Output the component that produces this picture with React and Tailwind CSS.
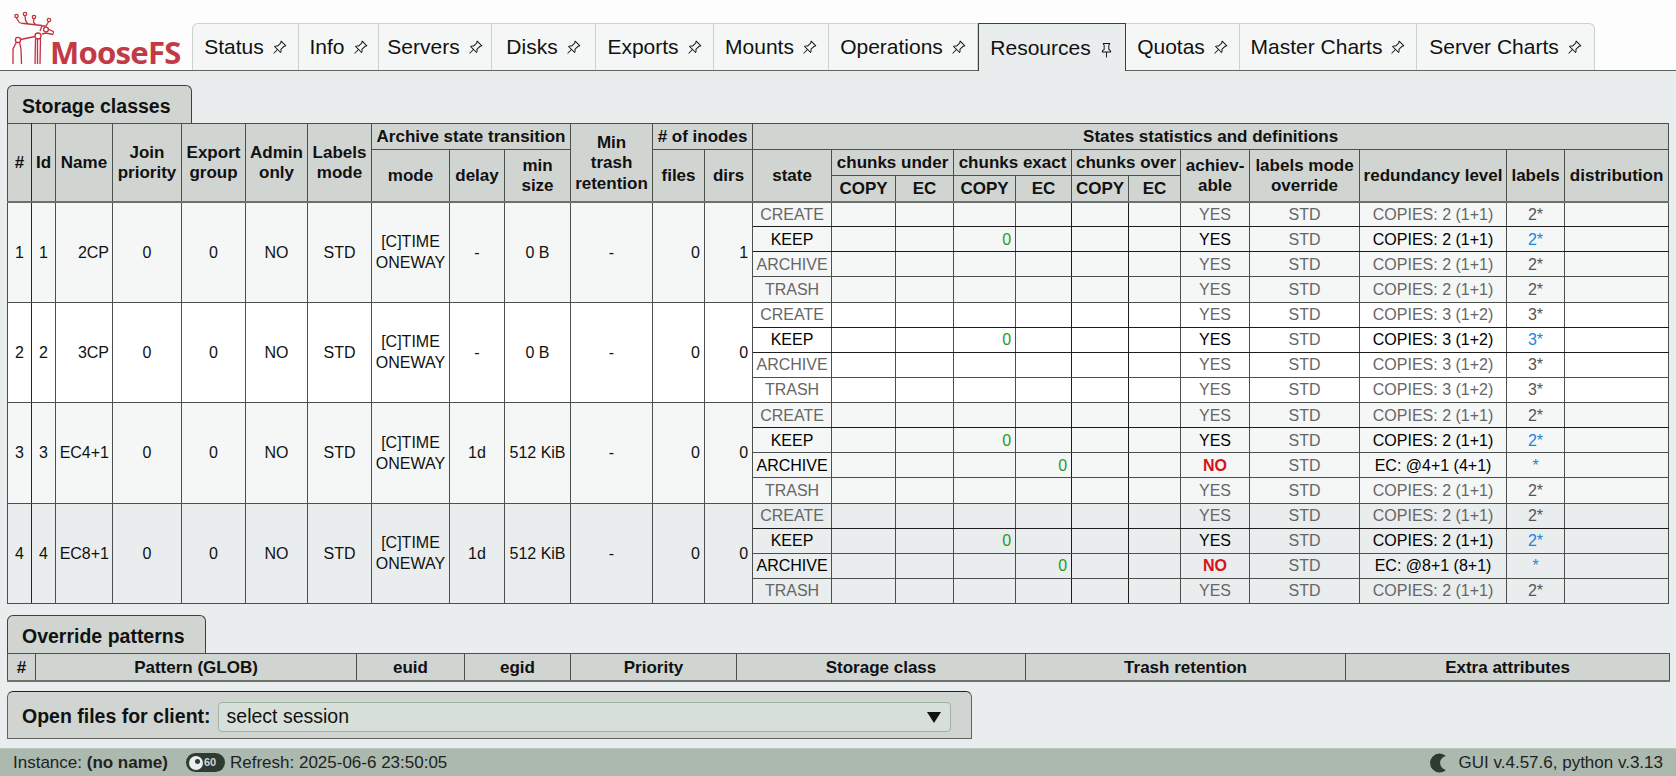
import React from 'react';
import { BsPinAngle, BsPin } from 'react-icons/bs';

const TABS = [
  ['Status', 107], ['Info', 80], ['Servers', 113], ['Disks', 104], ['Exports', 118], ['Mounts', 115],
  ['Operations', 149], ['Resources', 148], ['Quotas', 114], ['Master Charts', 177], ['Server Charts', 178],
];

const COLS = [24, 24, 57, 69, 64, 62, 64, 78, 55, 66, 82, 52, 48, 79, 64, 58, 62, 56, 57, 52, 69, 110, 147, 58, 104];
const OVERRIDE_COLS = [28, 321, 108, 106, 166, 289, 320, 324];

const th = 'border border-[#4a504c] bg-[#d0d5d1] font-bold text-center px-0 pt-[2px] leading-[20.5px]';
const td = 'border border-[#4a504c] text-center p-0 leading-[21px]';

const RULES = [
  { id: 1, name: '2CP', bg: 'bg-[#f5f7f6]', delay: '-', min: '0 B', copies: 'COPIES: 2 (1+1)', lab: '2*', dirs: 1 },
  { id: 2, name: '3CP', bg: 'bg-white', delay: '-', min: '0 B', copies: 'COPIES: 3 (1+2)', lab: '3*', dirs: 0 },
  { id: 3, name: 'EC4+1', bg: 'bg-[#f5f7f6]', delay: '1d', min: '512 KiB', copies: 'COPIES: 2 (1+1)', lab: '2*', ec: 'EC: @4+1 (4+1)', dirs: 0 },
  { id: 4, name: 'EC8+1', bg: 'bg-[#e9eded]', delay: '1d', min: '512 KiB', copies: 'COPIES: 2 (1+1)', lab: '2*', ec: 'EC: @8+1 (8+1)', dirs: 0 },
];

const STATES = ['CREATE', 'KEEP', 'ARCHIVE', 'TRASH'];

const Logo = () => (
  <div className="w-[192px] flex items-end shrink-0 pl-[10px]">
    <svg width="44" height="56" viewBox="10 12 44 56" fill="none" stroke="#c4323f" strokeWidth="1.3" className="shrink-0 mb-[3px]">
      <circle cx="16.5" cy="17" r="1.7" />
      <circle cx="25" cy="15" r="1.7" />
      <circle cx="34" cy="18" r="1.7" />
      <circle cx="49" cy="21" r="1.7" />
      <path d="M16.5 19 L19 23 Q20 24.5 24 24.5 L42 26.5 M25 17 L25.5 21 Q26 23 28 24.8 M34 20 L33.5 23 Q34 24.5 36 25.5 M48.5 23 L46 27 L42 27 L40 32" />
      <circle cx="46" cy="30.5" r="2.4" />
      <circle cx="38" cy="37" r="3" />
      <circle cx="18" cy="41" r="2.6" />
      <path d="M48 30 L54 33 L52.5 35.5 L46 34 L42 35 M20.5 40.5 L35 37.5" />
      <path d="M35.5 40 L35 65 M37.5 40 L37.5 65 M40.5 39 L40 65" />
      <path d="M16.5 43 L13 50 L13 65 M19.5 43 L21 50 L21.5 65" />
    </svg>
    <span className="font-['Noto_Sans'] font-bold text-[31px] leading-[31px] tracking-[-0.8px] text-[#c23a45] mb-[2px] -ml-[4px]">MooseFS</span>
  </div>
);

const Tabs = () => (
  <div className="flex self-end">
    {TABS.map(([name, w], i) => {
      const active = name === 'Resources';
      return (
        <div
          key={name}
          style={{ width: w }}
          className={`flex items-center justify-center gap-[8px] text-[21px] text-[#111] border-t border-r ${
            active
              ? 'bg-[#e9eded] border-[#3a423c] border-l -mb-px h-[48px]'
              : 'h-[47px] bg-[#f5f7f6] border-[#ccd2ce]'
          } ${i === 0 ? 'border-l rounded-tl-[6px]' : ''} ${i === TABS.length - 1 ? 'rounded-tr-[6px]' : ''}`}
        >
          {name}
          {active ? <BsPin size={15} className="mt-[5px]" /> : <BsPinAngle size={15} />}
        </div>
      );
    })}
  </div>
);

const ClassesTable = () => (
  <table className="table-fixed border-collapse w-[1662px] text-[16px] text-[#111]">
    <colgroup>
      {COLS.map((w, i) => <col key={i} style={{ width: w }} />)}
    </colgroup>
    <thead className="border-b-2 border-b-[#6a716c]">
      <tr className="h-[26px] text-[17px]">
        <th rowSpan={3} className={`${th} border-r-[#1c2a20]`}>#</th>
        <th rowSpan={3} className={th}>Id</th>
        <th rowSpan={3} className={th}>Name</th>
        <th rowSpan={3} className={th}>Join<br />priority</th>
        <th rowSpan={3} className={th}>Export<br />group</th>
        <th rowSpan={3} className={th}>Admin<br />only</th>
        <th rowSpan={3} className={th}>Labels<br />mode</th>
        <th colSpan={3} className={th}>Archive state transition</th>
        <th rowSpan={3} className={th}>Min<br />trash<br />retention</th>
        <th colSpan={2} className={th}># of inodes</th>
        <th colSpan={12} className={th}>States statistics and definitions</th>
      </tr>
      <tr className="h-[26px] text-[17px]">
        <th rowSpan={2} className={th}>mode</th>
        <th rowSpan={2} className={th}>delay</th>
        <th rowSpan={2} className={th}>min<br />size</th>
        <th rowSpan={2} className={th}>files</th>
        <th rowSpan={2} className={th}>dirs</th>
        <th rowSpan={2} className={th}>state</th>
        <th colSpan={2} className={th}>chunks under</th>
        <th colSpan={2} className={th}>chunks exact</th>
        <th colSpan={2} className={th}>chunks over</th>
        <th rowSpan={2} className={th}>achiev-<br />able</th>
        <th rowSpan={2} className={th}>labels mode<br />override</th>
        <th rowSpan={2} className={th}>redundancy level</th>
        <th rowSpan={2} className={th}>labels</th>
        <th rowSpan={2} className={th}>distribution</th>
      </tr>
      <tr className="h-[26px] text-[17px]">
        {['COPY', 'EC', 'COPY', 'EC', 'COPY', 'EC'].map((c, i) => <th key={i} className={th}>{c}</th>)}
      </tr>
    </thead>
    <tbody>
      {RULES.map((r) =>
        STATES.map((s, i) => {
          const isEc = s === 'ARCHIVE' && r.ec;
          const strong = s === 'KEEP' || isEc;
          const tone = strong ? 'text-black' : 'text-[#666]';
          // the line under CREATE (and under KEEP in the first two rules) reads darker
          const dark = s === 'CREATE' || (s === 'KEEP' && !r.ec);
          const cell = `${td} ${dark ? 'border-b-[#1c1c1c]' : ''}`;
          return (
            <tr key={s} className={`h-[25.125px] ${r.bg}`}>
              {i === 0 && (
                <>
                  <td rowSpan={4} className={`${td} border-r-[#1c2a20]`}>{r.id}</td>
                  <td rowSpan={4} className={td}>{r.id}</td>
                  <td rowSpan={4} className={`${td} text-right pr-[3px]`}>{r.name}</td>
                  <td rowSpan={4} className={td}>0</td>
                  <td rowSpan={4} className={td}>0</td>
                  <td rowSpan={4} className={td}>NO</td>
                  <td rowSpan={4} className={td}>STD</td>
                  <td rowSpan={4} className={td}>[C]TIME<br />ONEWAY</td>
                  <td rowSpan={4} className={td}>{r.delay}</td>
                  <td rowSpan={4} className={td}>{r.min}</td>
                  <td rowSpan={4} className={td}>-</td>
                  <td rowSpan={4} className={`${td} text-right pr-[4px]`}>0</td>
                  <td rowSpan={4} className={`${td} text-right pr-[4px]`}>{r.dirs}</td>
                </>
              )}
              <td className={`${cell} ${s === 'ARCHIVE' && !r.ec ? 'text-[#666]' : tone}`}>{s}</td>
              <td className={cell} />
              <td className={cell} />
              <td className={`${cell} text-right pr-[4px] text-[#2a9a1e]`}>{s === 'KEEP' ? '0' : ''}</td>
              <td className={`${cell} border-r-[#1c1c1c] text-right pr-[4px] text-[#2a9a1e]`}>{isEc ? '0' : ''}</td>
              <td className={`${cell} border-r-[#1c1c1c]`} />
              <td className={cell} />
              <td className={`${cell} ${isEc ? 'text-[#d8121a] font-bold' : tone}`}>{isEc ? 'NO' : 'YES'}</td>
              <td className={`${cell} text-[#666]`}>STD</td>
              <td className={`${cell} ${tone}`}>{isEc ? r.ec : r.copies}</td>
              <td className={`${cell} ${strong ? 'text-[#1c84dc]' : 'text-[#555]'}`}>{isEc ? '*' : r.lab}</td>
              <td className={cell} />
            </tr>
          );
        })
      )}
    </tbody>
  </table>
);

const OverrideTable = () => (
  <table className="table-fixed border-collapse w-[1662px] text-[17px] text-[#111]">
    <colgroup>
      {OVERRIDE_COLS.map((w, i) => <col key={i} style={{ width: w }} />)}
    </colgroup>
    <thead className="border-b-2 border-b-[#6a716c]">
      <tr className="h-[27px]">
        {['#', 'Pattern (GLOB)', 'euid', 'egid', 'Priority', 'Storage class', 'Trash retention', 'Extra attributes'].map((h) => (
          <th key={h} className={th}>{h}</th>
        ))}
      </tr>
    </thead>
  </table>
);

const Title = ({ children }) => (
  <div className="inline-block align-bottom h-[38px] leading-[40px] pl-[14px] pr-[20px] bg-[#d0d5d1] border border-b-0 border-[#3a423c] rounded-t-[6px] font-bold text-[19.5px] text-[#111]">
    {children}
  </div>
);

const App = () => (
  <div className="h-screen flex flex-col overflow-hidden bg-[#e9eded] font-['Liberation_Sans',Arial,sans-serif]">
    <div className="h-[71px] shrink-0 flex bg-[#fdfdfd] border-b border-[#5f6661]">
      <Logo />
      <Tabs />
    </div>
    <div className="flex-1 pl-[7px] pt-[14px]">
      <div className="flex"><Title>Storage classes</Title></div>
      <ClassesTable />
      <div className="flex mt-[11px]"><Title>Override patterns</Title></div>
      <OverrideTable />
      <div className="mt-[9px] w-[965px] h-[48px] flex items-center gap-[7px] pl-[14px] pt-[5px] bg-[#d0d5d1] border border-[#5f6661] border-t-[#222] rounded-t-[6px] font-bold text-[19.5px] text-[#111]">
        Open files for client:
        <div className="w-[733px] h-[30px] flex items-center justify-between pl-[8px] pr-[9px] bg-[#d7dfd9] border border-[#9fb3a5] rounded-[4px] font-normal text-[19.5px]">
          select session
          <span className="w-0 h-0 border-x-[7px] border-x-transparent border-t-[11px] border-t-[#111]" />
        </div>
      </div>
    </div>
    <div className="h-[28px] shrink-0 flex items-center justify-between pl-[13px] pr-[13px] bg-[#abb9ae] border-t border-[#bcc8bf] text-[17px] text-[#222]">
      <div className="flex items-center">
        <span>Instance: <b>(no name)</b></span>
        <span className="ml-[18px] w-[39px] h-[19px] flex items-center gap-[1px] pl-[3px] rounded-full bg-[#2e3a32]">
          <span className="w-[14px] h-[14px] rounded-full bg-[#e9eded] flex justify-end">
            <span className="w-[5px] h-[5px] mt-[3px] mr-[3px] rounded-full bg-[#2e3a32]" />
          </span>
          <span className="text-[11px] font-bold text-[#d0d5d1]">60</span>
        </span>
        <span className="ml-[5px]">Refresh: 2025-06-6 23:50:05</span>
      </div>
      <div className="flex items-center gap-[12px]">
        <svg width="17" height="20" viewBox="0 0 17 20" fill="#2e3a32"><path d="M16 3 A 9.5 9.5 0 1 0 16 17 A 7.1 7.1 0 0 1 16 3 Z" /></svg>
        <span>GUI v.4.57.6, python v.3.13</span>
      </div>
    </div>
  </div>
);

export default App;
